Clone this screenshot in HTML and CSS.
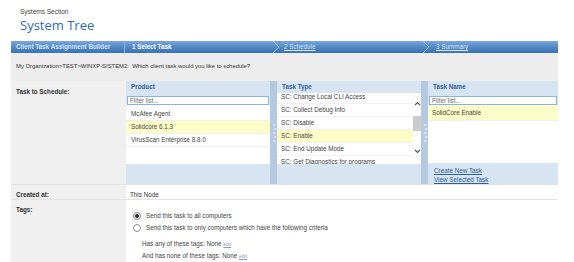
FILE: index.html
```html
<html>
<head>
    <meta charset="utf-8" />
    <title>System Tree</title>
    <link rel="stylesheet" href="styles.css">
</head>
<body>
    <div class="page-head">
        <div class="section-name">Systems Section</div>
        <h1 class="page-title">System Tree</h1>
    </div>
    <div class="wizard">
        <div class="steps">
            <div class="step-title">Client Task Assignment Builder</div>
            <div class="step step-one">
                <span class="current">1 Select Task</span>
                <svg class="chev" width="9" height="12" viewBox="0 0 9 12"><polyline points="1,0 7,6 1,12" fill="none" stroke="#a9c6e6" stroke-width="1"/></svg>
            </div>
            <div class="step step-two">
                <a href="#">2 Schedule</a>
                <svg class="chev" width="9" height="12" viewBox="0 0 9 12"><polyline points="1,0 7,6 1,12" fill="none" stroke="#a9c6e6" stroke-width="1"/></svg>
            </div>
            <div class="step step-three">
                <a href="#">3 Summary</a>
            </div>
        </div>
        <div class="question">My Organization&gt;TEST&gt;WINXP-SISTEM2:&nbsp; Which client task would you like to schedule?</div>

        <div class="form-row picker-row">
            <div class="label">Task to Schedule:</div>
            <div class="picker">
                <div class="panel product">
                    <div class="panel-head">Product</div>
                    <input class="filter" type="text" placeholder="Filter list..." />
                    <div class="list">
                        <div class="row">McAfee Agent</div>
                        <div class="row selected">Solidcore 6.1.3</div>
                        <div class="row">VirusScan Enterprise 8.8.0</div>
                    </div>
                    <div class="panel-foot"></div>
                </div>
                <div class="splitter"><i></i><i></i><i></i><i></i><i></i></div>
                <div class="panel task-type">
                    <div class="panel-head">Task Type</div>
                    <div class="list scroll-list">
                        <div class="rows">
                            <div class="row">SC: Change Local CLI Access</div>
                            <div class="row">SC: Collect Debug Info</div>
                            <div class="row">SC: Disable</div>
                            <div class="row selected">SC: Enable</div>
                            <div class="row">SC: End Update Mode</div>
                            <div class="row">SC: Get Diagnostics for programs</div>
                        </div>
                        <div class="scrollbar">
                            <svg class="arrow-up" width="7" height="5" viewBox="0 0 7 5"><polyline points="1,4 3.5,1.5 6,4" fill="none" stroke="#555" stroke-width="1.2"/></svg>
                            <div class="thumb"></div>
                            <svg class="arrow-down" width="7" height="5" viewBox="0 0 7 5"><polyline points="1,1 3.5,3.5 6,1" fill="none" stroke="#555" stroke-width="1.2"/></svg>
                        </div>
                    </div>
                    <div class="panel-foot"></div>
                </div>
                <div class="splitter"><i></i><i></i><i></i><i></i><i></i></div>
                <div class="panel task-name">
                    <div class="panel-head">Task Name</div>
                    <input class="filter" type="text" placeholder="Filter list..." />
                    <div class="list">
                        <div class="row selected">SolidCore Enable</div>
                    </div>
                    <div class="panel-foot links">
                        <a href="#">Create New Task</a>
                        <a href="#">View Selected Task</a>
                    </div>
                </div>
            </div>
        </div>

        <div class="form-row">
            <div class="label">Created at:</div>
            <div class="value">This Node</div>
        </div>

        <div class="form-row tags-row">
            <div class="label">Tags:</div>
            <div class="value">
                <label class="choice"><input type="radio" name="send" checked /> Send this task to all computers</label>
                <label class="choice"><input type="radio" name="send" /> Send this task to only computers which have the following criteria</label>
                <div class="criteria">
                    <p>Has any of these tags: None <a href="#">edit</a></p>
                    <p>And has none of these tags: None <a href="#">edit</a></p>
                </div>
            </div>
        </div>
    </div>
</body>
</html>
```

FILE: styles.css
```css
body {
    margin: 0;
    background-color: #fff;
    font-family: "Liberation Sans", Arial, sans-serif;
    font-size: 6.3px;
    color: #333;
}
.page-head {
    box-sizing: border-box;
    height: 41px;
    padding: 8px 0 0 20px;
}
.section-name {
    line-height: 8px;
    font-size: 6.5px;
    color: #444;
}
.page-title {
    margin: 1px 0 0 0;
    font-family: "Open Sans", sans-serif;
    font-size: 13px;
    font-weight: normal;
    line-height: 16px;
    color: #2d6db3;
}
.wizard {
    margin-left: 11px;
    width: 547px;
}
.steps {
    display: flex;
    flex-direction: row;
    height: 12px;
    line-height: 12px;
    background: linear-gradient(#7ba8da, #4f86c4 55%, #3b72b3);
    color: #e4edf7;
}
.step-title {
    box-sizing: border-box;
    width: 114px;
    padding-left: 5px;
    font-weight: bold;
    color: #d9e4f1;
    border-right: 1px solid #8fb3dc;
}
.step {
    box-sizing: border-box;
    display: flex;
    flex-direction: row;
    justify-content: space-between;
    align-items: center;
}
.step-one {
    width: 156px;
    padding-left: 7px;
}
.step-two {
    width: 150px;
    padding-left: 3px;
}
.step-three {
    flex: 1;
    padding-left: 5px;
}
.current {
    font-weight: bold;
    color: #fff;
}
.step a {
    color: #dce7f4;
}
.chev {
    display: block;
}
.question {
    box-sizing: border-box;
    height: 28px;
    padding: 9px 0 0 5px;
    line-height: 8px;
    font-size: 5.9px;
    background-color: #ededed;
    color: #333;
}
.form-row {
    display: grid;
    grid-template-columns: 115px 1fr;
    border-bottom: 1px solid #e3e3e3;
}
.label {
    padding: 6px 0 0 5px;
    line-height: 8px;
    font-weight: bold;
    background-color: #f0f0f0;
    color: #333;
}
.value {
    padding: 6px 0 0 4px;
    line-height: 8px;
}
.picker-row .label {
    padding-top: 7px;
}
.picker {
    display: flex;
    flex-direction: row;
    height: 103px;
}
.panel {
    box-sizing: border-box;
    display: flex;
    flex-direction: column;
    background-color: #d7e4f1;
}
.product, .task-type {
    width: 144px;
}
.task-name {
    width: 130px;
}
.panel-head {
    height: 12px;
    line-height: 12px;
    padding-left: 5px;
    font-weight: bold;
    color: #2c5e9e;
}
.filter {
    box-sizing: border-box;
    display: block;
    margin: 3px 1px 0 1px;
    height: 9px;
    padding: 0 2px;
    border: 1px solid #8db3dc;
    font-family: "Liberation Sans", Arial, sans-serif;
    font-size: 6.3px;
    color: #555;
    outline: none;
}
.filter::placeholder {
    color: #6a6a6a;
}
.list {
    flex: 1;
    background-color: #fff;
    overflow: hidden;
}
.product .list {
    padding-top: 3px;
}
.row {
    box-sizing: border-box;
    height: 13px;
    line-height: 12px;
    padding-left: 5px;
    border-bottom: 1px solid #f1f1f1;
    color: #444;
    white-space: nowrap;
}
.row.selected {
    background-color: #fdfdc8;
}
.task-name .row {
    height: 16px;
    line-height: 15px;
    padding-left: 4px;
}
.task-type .row {
    padding-left: 4px;
}
.scroll-list {
    display: flex;
    flex-direction: row;
}
.rows {
    flex: 1;
    margin-top: -2px;
}
.scrollbar {
    width: 8px;
    display: flex;
    flex-direction: column;
    align-items: center;
    background-color: #fff;
}
.arrow-up {
    margin-top: 8px;
}
.thumb {
    width: 8px;
    height: 15px;
    margin-top: 10px;
    background-color: #cbcbcb;
}
.arrow-down {
    margin-top: 18px;
}
.panel-foot {
    height: 20px;
}
.links {
    display: flex;
    flex-direction: column;
    padding: 3px 0 0 6px;
    height: 21px;
    box-sizing: border-box;
}
.links a {
    line-height: 9px;
    color: #2c5e9e;
}
.splitter {
    width: 7px;
    display: flex;
    flex-direction: column;
    align-items: center;
    justify-content: center;
    gap: 2px;
    background-color: #b5cae0;
}
.splitter i {
    display: block;
    width: 2px;
    height: 2px;
    border-radius: 1px;
    background-color: #e6eef7;
}
.splitter i:nth-child(even) {
    margin-left: 2px;
}
.tags-row {
    border-bottom: none;
    height: 70px;
}
.tags-row .value {
    padding-left: 7px;
}
.choice {
    display: flex;
    flex-direction: row;
    align-items: center;
    height: 12px;
    color: #444;
}
.tags-row .value .choice:first-child {
    margin-top: 4px;
}
.choice input {
    appearance: none;
    box-sizing: border-box;
    width: 8px;
    height: 8px;
    margin: 0 5px 0 0;
    border: 1px solid #8a8a8a;
    border-radius: 50%;
    background-color: #fff;
}
.choice input:checked {
    background: radial-gradient(circle, #333 0 1.8px, #fff 2.2px);
}
.criteria {
    padding: 4px 0 0 9px;
}
.criteria p {
    margin: 0;
    height: 12px;
    line-height: 12px;
    color: #444;
}
.criteria a {
    font-size: 5px;
    color: #8a9bb5;
}
```
